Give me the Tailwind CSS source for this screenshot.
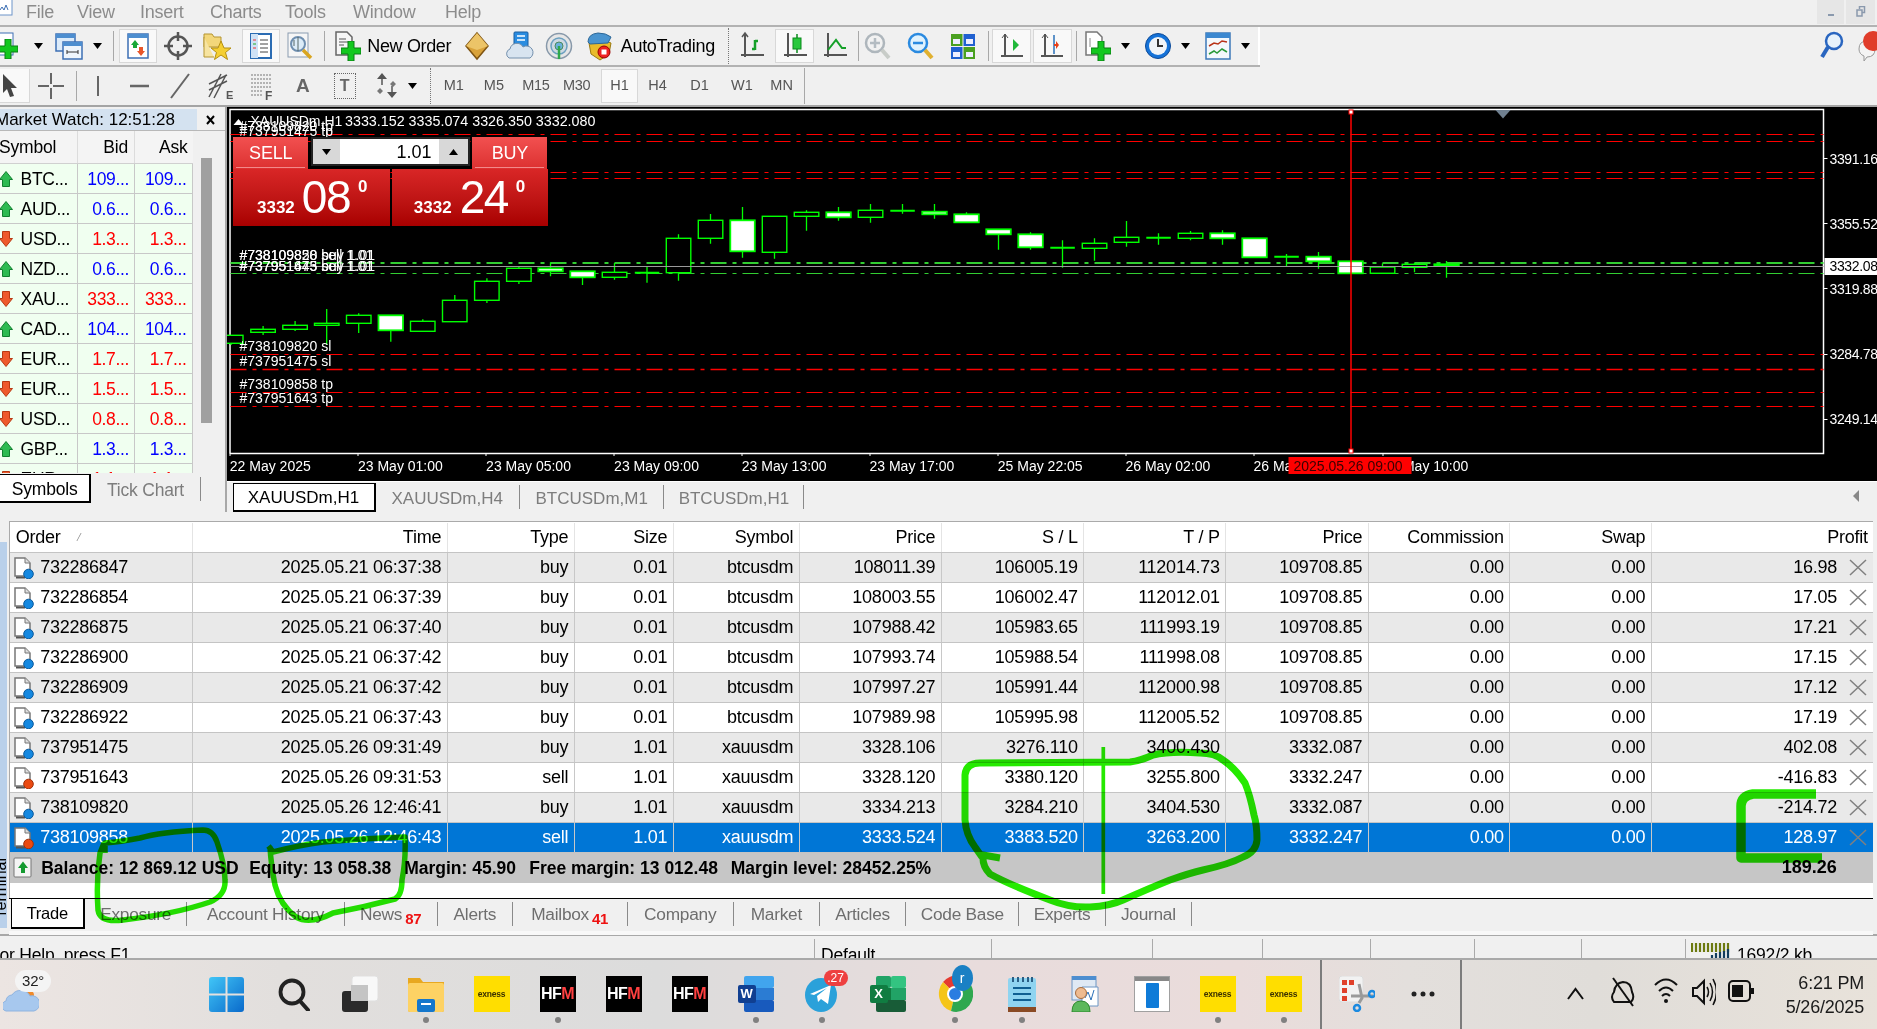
<!DOCTYPE html>
<html lang="en"><head><meta charset="utf-8"><title>MetaTrader</title>
<script src="https://cdn.jsdelivr.net/npm/@tailwindcss/browser@4"></script></head>
<body class="m-0 overflow-hidden">
<svg class="absolute w-0 h-0" aria-hidden="true"><defs>
<symbol id="plus" viewBox="0 0 20 20"><path d="M7 0h6v7h7v6h-7v7H7v-7H0V7h7z" fill="#12c81e" stroke="#0a7d14" stroke-width="1"/></symbol>
<symbol id="docb" viewBox="0 0 21 22"><path d="M2 1h10l5 5v13H2z" fill="#fff" stroke="#777" stroke-width="1.5"/><path d="M12 1v5h5" fill="#ddd" stroke="#777"/><path d="M3 20.500h9" stroke="#555" stroke-width="2"/><circle cx="15.500" cy="17" r="4.800" fill="#1488e0" stroke="#0b5a9c"/></symbol>
<symbol id="docr" viewBox="0 0 21 22"><path d="M2 1h10l5 5v13H2z" fill="#fff" stroke="#777" stroke-width="1.5"/><path d="M12 1v5h5" fill="#ddd" stroke="#777"/><path d="M3 20.500h9" stroke="#555" stroke-width="2"/><circle cx="15.500" cy="17" r="4.800" fill="#ea4a12" stroke="#a0300a"/></symbol>
<symbol id="up" viewBox="0 0 14 16"><path d="M7 .5 13.500 8.500H10.500V15.500H3.500V8.500H.5z" fill="#2dbb52" stroke="#128030"/></symbol>
<symbol id="down" viewBox="0 0 14 16"><path d="M7 15.500 13.500 7.500H10.500V.5H3.500V7.500H.5z" fill="#ee5a2c" stroke="#b83a14"/></symbol>
<symbol id="xx" viewBox="0 0 18 17"><path d="M1 1 17 16M17 1 1 16" stroke="#808080" stroke-width="1.500" fill="none"/></symbol>
<symbol id="caret" viewBox="0 0 9 6"><path d="M0 0h9L4.500 6z" fill="#000"/></symbol>
</defs></svg>

<div class="relative w-[1877px] h-[1029px] overflow-hidden flex flex-col bg-[#f0f0f0] text-[18px] text-black font-['Liberation_Sans',sans-serif]">

<!-- menu -->
<div class="h-[25px] shrink-0 flex items-center text-[#8c8c8c] tracking-[-0.25px] relative">
  <svg class="w-[14px] h-[17px] shrink-0 self-start" viewBox="0 0 14 17"><rect x="-4" y="-1" width="16" height="16" fill="#fff" stroke="#6d94c9"/><path d="M0 10l2-3 2 3 2-5 2 5" stroke="#3c6fb4" fill="none"/></svg>
  <span class="ml-[12px] w-[51px]">File</span><span class="w-[63px]">View</span><span class="w-[70px]">Insert</span><span class="w-[75px]">Charts</span><span class="w-[68px]">Tools</span><span class="w-[92px]">Window</span><span>Help</span>
  <div class="ml-auto flex self-start h-[24px] mr-[2px] gap-[2px]">
    <div class="w-[27px] bg-[#e6e6e6] flex items-center justify-center"><div class="w-[6px] h-[2px] mt-[5px] bg-[#8a99ad]"></div></div>
    <div class="w-[29px] bg-[#e6e6e6] flex items-center justify-center"><svg class="w-[10px] h-[12px]" viewBox="0 0 10 12"><path d="M3.500 3V.5h5v6H6M1 4h5v6H1z" fill="none" stroke="#8a99ad" stroke-width="1.500"/></svg></div>
  </div>
</div>
<div class="h-[2px] shrink-0 bg-[#b2b2b2]"></div>

<!-- toolbar 1 -->
<div class="h-[38px] shrink-0 flex items-center relative overflow-hidden">
  <div class="w-[1260px] h-[38px] shrink-0 flex items-center border-r-2 border-[#fff]">
    <svg class="w-[28px] h-[30px] shrink-0 ml-[-8px]" viewBox="0 0 28 30"><rect x="1" y="2" width="20" height="22" fill="#fff" stroke="#3c6fb4"/><use href="#plus" x="6" y="8" width="20" height="20"/></svg>
    <svg class="w-[9px] h-[6px] shrink-0 ml-[13.5px]"><use href="#caret"/></svg>
    <svg class="w-[28px] h-[30px] shrink-0 ml-[12.5px]" viewBox="0 0 28 30"><rect x="1" y="3" width="19" height="17" fill="#dcebfa" stroke="#3c6fb4" stroke-width="1.500"/><rect x="1" y="3" width="19" height="4" fill="#4d8ed0"/><rect x="8" y="11" width="19" height="17" fill="#eef5fc" stroke="#3c6fb4" stroke-width="1.500"/><rect x="8" y="11" width="19" height="4" fill="#4d8ed0"/><path d="M12 21h11M12 19v4M23 19v4" stroke="#333" fill="none"/></svg>
    <svg class="w-[9px] h-[6px] shrink-0 ml-[9.5px]"><use href="#caret"/></svg>
    <div class="w-px h-[30px] shrink-0 ml-[11.5px] bg-[#a8a8a8]"></div>
    <div class="w-[38.3px] h-[34px] shrink-0 ml-[5px] bg-[#f9f9f9] border border-[#d8d8d8] flex items-center justify-center"><svg class="w-[24px] h-[28px]" viewBox="0 0 24 28"><rect x="2" y="2" width="20" height="24" fill="#fff" stroke="#3c6fb4" stroke-width="1.500"/><rect x="2" y="2" width="20" height="4" fill="#4d8ed0"/><path d="M9 8 13 13H11v3H7v-3H5z" fill="#18a838"/><path d="M15 24 19 19H17v-4h-4v4h-2z" fill="#e8562a"/></svg></div>
    <svg class="w-[28px] h-[30px] shrink-0 ml-[6.5px]" viewBox="0 0 28 30"><circle cx="14" cy="15" r="9.500" fill="none" stroke="#555" stroke-width="2.500"/><path d="M14 1v9M14 20v9M0 15h9M19 15h9" stroke="#555" stroke-width="2.500"/></svg>
    <svg class="w-[28px] h-[30px] shrink-0 ml-[11.5px]" viewBox="0 0 28 30"><path d="M1 3h8l2 3h7v10H1z" fill="#f3d77a" stroke="#b59530"/><path d="M1 6v20h10" fill="#f7e4a0" stroke="#b59530"/><path d="M18 10l3 7h7l-5.500 4.500 2 7-6.500-4.500-6.500 4.500 2-7L8 17h7z" fill="#f5cf33" stroke="#b58f10"/></svg>
    <div class="w-[37.8px] h-[34px] shrink-0 ml-[10.6px] bg-[#f9f9f9] border border-[#d8d8d8] flex items-center justify-center"><svg class="w-[24px] h-[28px]" viewBox="0 0 24 28"><rect x="2" y="2" width="20" height="24" fill="#fff" stroke="#2b6cb3" stroke-width="2"/><rect x="2" y="2" width="7" height="24" fill="#cfe2f6"/><path d="M11 8h8M11 12h8M11 16h8M11 20h8" stroke="#444"/><path d="M4 8h3" stroke="#e33"/><path d="M4 12h3" stroke="#2a2"/><path d="M4 16h3" stroke="#e33"/></svg></div>
    <svg class="w-[28px] h-[30px] shrink-0 ml-[6.6px]" viewBox="0 0 28 30"><rect x="2" y="2" width="20" height="24" fill="#f6f6f6" stroke="#8a9bb0"/><circle cx="12" cy="13" r="7" fill="#dcecf8" stroke="#6f8fb0" stroke-width="2"/><path d="M12 6v14M8 9v6" stroke="#566" fill="none"/><path d="M17 19l8 8" stroke="#d9a520" stroke-width="3.500"/></svg>
    <div class="w-px h-[30px] shrink-0 ml-[10px] bg-[#a8a8a8]"></div>
    <svg class="w-[28px] h-[30px] shrink-0 ml-[8.7px]" viewBox="0 0 28 30"><path d="M2 1h11l5 5v18H2z" fill="#f6f6f6" stroke="#666" stroke-width="1.500"/><path d="M5 8h7M5 11h10M5 14h5" stroke="#555"/><use href="#plus" x="7" y="10" width="20" height="20"/></svg>
    <span class="shrink-0 ml-[5.3px] w-[86px] tracking-[-0.35px] whitespace-nowrap">New Order</span>
    <svg class="w-[28px] h-[30px] shrink-0 ml-[9.6px]" viewBox="0 0 28 30"><path d="M14 2 25 15 14 28 3 15z" fill="#d9a23a" stroke="#7f5412" stroke-width="1.500"/><path d="M14 2 3 15l11 4 11-4z" fill="#ecc468"/></svg>
    <svg class="w-[28px] h-[30px] shrink-0 ml-[15.4px]" viewBox="0 0 28 30"><rect x="8" y="1" width="14" height="20" rx="1" fill="#2a8ce0" stroke="#1a5ea0"/><path d="M11 5h8M11 9h8" stroke="#fff" stroke-width="1.500"/><path d="M3 27a5 5 0 0 1 1-9 7 7 0 0 1 13-2 6 6 0 0 1 7 11z" fill="#d8e4f0" stroke="#7490ad"/></svg>
    <svg class="w-[28px] h-[30px] shrink-0 ml-[11px]" viewBox="0 0 28 30"><circle cx="14" cy="15" r="12.500" fill="#e6e6e6" stroke="#8899aa" stroke-width="1.500"/><circle cx="14" cy="15" r="8" fill="#cdd8e2" stroke="#6ba0c0" stroke-width="1.500"/><circle cx="14" cy="15" r="4" fill="#6cb0dc" stroke="#4a8a5c"/><path d="M14 15v13" stroke="#2fa84a" stroke-width="2.500"/></svg>
    <svg class="w-[28px] h-[30px] shrink-0 ml-[12.5px]" viewBox="0 0 28 30"><path d="M3 12 14 8l11 4-2 11-9 6-9-6z" fill="#e9bb2a" stroke="#9a7a12"/><path d="M2 11q0-8 10-9 8 0 13 4l-3 6-18 1z" fill="#4a94cf" stroke="#2c6797"/><circle cx="18" cy="21" r="6" fill="#e22" stroke="#900"/><rect x="15.500" y="18.500" width="5" height="5" fill="#fff"/></svg>
    <span class="shrink-0 ml-[7px] w-[98px] tracking-[-0.3px] whitespace-nowrap">AutoTrading</span>
    <div class="h-[36px] shrink-0 ml-[9.5px] border-l border-dotted border-[#777]"></div>
    <svg class="w-[28px] h-[30px] shrink-0 ml-[9px]" viewBox="0 0 28 30"><path d="M7 2v24M3 24h23" stroke="#555" stroke-width="2"/><path d="M4 6l3-4 3 4" fill="none" stroke="#555" stroke-width="1.500"/><path d="M17 9v10M14 18h3M17 10h3" stroke="#14a028" stroke-width="2.500" fill="none"/></svg>
    <div class="w-[38.5px] h-[34px] shrink-0 ml-[9px] bg-[#f9f9f9] border border-[#d8d8d8] flex items-center justify-center"><svg class="w-[26px] h-[30px]" viewBox="0 0 26 30"><path d="M6 2v24M2 24h23" stroke="#555" stroke-width="2"/><path d="M15 3v19" stroke="#0a8a1c" stroke-width="1.500"/><rect x="11" y="7" width="8" height="11" fill="#28c83c" stroke="#0a8a1c"/></svg></div>
    <svg class="w-[28px] h-[30px] shrink-0 ml-[7px]" viewBox="0 0 28 30"><path d="M7 2v24M3 24h23" stroke="#555" stroke-width="2"/><path d="M7 19 15 9l6 8h4" stroke="#14a028" stroke-width="2" fill="none"/></svg>
    <div class="w-px h-[30px] shrink-0 ml-[9.5px] bg-[#a8a8a8]"></div>
    <svg class="w-[28px] h-[30px] shrink-0 ml-[4px]" viewBox="0 0 28 30"><circle cx="12" cy="12" r="9" fill="#f2f2f2" stroke="#aeb6bc" stroke-width="2.500"/><path d="M12 7v10M7 12h10" stroke="#b4bcc2" stroke-width="2.500"/><path d="M19 19l7 8" stroke="#c8ccc8" stroke-width="4"/></svg>
    <svg class="w-[28px] h-[30px] shrink-0 ml-[15px]" viewBox="0 0 28 30"><circle cx="12" cy="12" r="9" fill="#e0f2fd" stroke="#2a8ae0" stroke-width="2.500"/><path d="M7 12h10" stroke="#2a8ae0" stroke-width="2.500"/><path d="M19 19l7 8" stroke="#e0b030" stroke-width="4"/></svg>
    <svg class="w-[28px] h-[30px] shrink-0 ml-[14.7px]" viewBox="0 0 28 30"><rect x="2" y="3" width="11.500" height="12" fill="#4aa020"/><rect x="14.500" y="3" width="11.500" height="12" fill="#2060d0"/><rect x="2" y="16" width="11.500" height="12" fill="#2060d0"/><rect x="14.500" y="16" width="11.500" height="12" fill="#4aa020"/><path d="M4 8h7v5H4zM17 8h7v5h-7zM4 21h7v5H4zM17 21h7v5h-7z" fill="#eef"/></svg>
    <div class="w-px h-[30px] shrink-0 ml-[11px] bg-[#a8a8a8]"></div>
    <div class="w-[38.8px] h-[34px] shrink-0 ml-[3.2px] bg-[#f9f9f9] border border-[#d8d8d8] flex items-center justify-center"><svg class="w-[26px] h-[30px]" viewBox="0 0 26 30"><path d="M6 3v23M2 25h22" stroke="#555" stroke-width="2"/><path d="M3 7l3-4 3 4" fill="none" stroke="#555"/><path d="M14 8l6 6-6 6z" fill="#20b83a"/></svg></div>
    <div class="w-[38.5px] h-[34px] shrink-0 ml-[2.2px] bg-[#f9f9f9] border border-[#d8d8d8] flex items-center justify-center"><svg class="w-[26px] h-[30px]" viewBox="0 0 26 30"><path d="M6 3v23M2 25h22" stroke="#555" stroke-width="2"/><path d="M3 7l3-4 3 4" fill="none" stroke="#555"/><path d="M15 4v19" stroke="#2a70b8" stroke-width="1.500"/><path d="M20 14l-3-4v3h-2v2h2v3z" fill="#e8401a"/></svg></div>
    <div class="w-px h-[30px] shrink-0 ml-[4.2px] bg-[#a8a8a8]"></div>
    <svg class="w-[28px] h-[30px] shrink-0 ml-[7.3px]" viewBox="0 0 28 30"><path d="M2 1h11l5 5v18H2z" fill="#fff" stroke="#777" stroke-width="1.500"/><path d="M6 7v9" stroke="#888"/><use href="#plus" x="7" y="10" width="20" height="20"/></svg>
    <svg class="w-[9px] h-[6px] shrink-0 ml-[8.5px]"><use href="#caret"/></svg>
    <svg class="w-[28px] h-[30px] shrink-0 ml-[14.1px]" viewBox="0 0 28 30"><circle cx="14" cy="15" r="12.500" fill="#1472d8" stroke="#0c4a98"/><circle cx="14" cy="15" r="9" fill="#f0f4f8"/><path d="M14 8v7h5" stroke="#333" stroke-width="2" fill="none"/></svg>
    <svg class="w-[9px] h-[6px] shrink-0 ml-[8.9px]"><use href="#caret"/></svg>
    <svg class="w-[28px] h-[30px] shrink-0 ml-[14.5px]" viewBox="0 0 28 30"><rect x="2" y="2" width="24" height="26" fill="#f4f8fc" stroke="#3c78b8" stroke-width="1.500"/><rect x="2" y="2" width="24" height="5" fill="#3c88d0"/><path d="M5 15l5-3 4 1 4-3 5 1" stroke="#b8341a" stroke-width="1.500" fill="none"/><path d="M5 23l5-3 3 2 5-4 5 3" stroke="#2a9a3a" stroke-width="1.500" fill="none"/></svg>
    <svg class="w-[9px] h-[6px] shrink-0 ml-[9px]"><use href="#caret"/></svg>
  </div>
  <svg class="w-[26px] h-[34px] shrink-0 ml-[559px]" viewBox="0 0 26 34"><circle cx="15" cy="12" r="8" fill="#e8f2fb" stroke="#2a66c0" stroke-width="2.500"/><path d="M9 18 3 28" stroke="#2a66c0" stroke-width="4"/></svg>
  <svg class="w-[25px] h-[38px] shrink-0 ml-[11px]" viewBox="0 0 25 38"><path d="M3 22q0-8 8-8t8 8-8 8l-3 4v-5q-5-2-5-7z" fill="#f4f4f4" stroke="#999"/><circle cx="17" cy="14" r="10" fill="#e03c2a"/></svg>
</div>
<div class="h-[2px] w-[1260px] shrink-0 bg-[#b2b2b2]"></div>

<!-- toolbar 2 -->
<div class="h-[38px] shrink-0 flex items-center text-[14.5px] text-[#555]">
  <div class="w-[30px] h-[34px] shrink-0 bg-[#f9f9f9] border-r border-b border-[#d8d8d8] flex items-center"><svg class="w-[18px] h-[26px]" viewBox="0 0 18 26"><path d="M3 1v19l4-4 3 8 4-1-3-8h6z" fill="#444"/></svg></div>
  <svg class="w-[28px] h-[30px] shrink-0 ml-[7px]" viewBox="0 0 28 30"><path d="M14 2v11M14 17v11M1 15h11M16 15h11" stroke="#666" stroke-width="2"/></svg>
  <div class="w-px h-[30px] shrink-0 ml-[10.5px] bg-[#a8a8a8]"></div>
  <svg class="w-[28px] h-[30px] shrink-0 ml-[7.2px]" viewBox="0 0 28 30"><path d="M14 5v20" stroke="#666" stroke-width="2"/></svg>
  <svg class="w-[28px] h-[30px] shrink-0 ml-[14px]" viewBox="0 0 28 30"><path d="M4 15h19" stroke="#666" stroke-width="2.500"/></svg>
  <svg class="w-[28px] h-[30px] shrink-0 ml-[12.300px]" viewBox="0 0 28 30"><path d="M5 27 23 3" stroke="#666" stroke-width="2"/></svg>
  <svg class="w-[28px] h-[30px] shrink-0 ml-[12.600px]" viewBox="0 0 28 30"><path d="M2 26 14 3M7 27 19 4M2 13 20 4M2 19 20 10" stroke="#555" stroke-width="1.500"/><text x="19" y="28" font-size="11" font-weight="700" fill="#555">E</text></svg>
  <svg class="w-[28px] h-[30px] shrink-0 ml-[13.400px]" viewBox="0 0 28 30"><path d="M3 4h20M3 8h20M3 12h20M3 16h20M3 20h12M3 24h12" stroke="#777" stroke-dasharray="2 1"/><text x="17" y="29" font-size="12" font-weight="700" fill="#555">F</text></svg>
  <div class="w-[28px] shrink-0 ml-[12.800px] text-center font-bold text-[19px] text-[#666]">A</div>
  <div class="w-[28px] shrink-0 ml-[13.900px] flex justify-center"><div class="w-[22px] h-[26px] border border-dotted border-[#666] flex items-center justify-center font-bold text-[16px] text-[#666]">T</div></div>
  <svg class="w-[28px] h-[30px] shrink-0 ml-[14px]" viewBox="0 0 28 30"><path d="M9 2l5 6H4zM19 27l5-6H14z" fill="#555"/><path d="M9 8v6M19 15v6" stroke="#555" stroke-width="1.500"/><path d="M20 10l3 3-3 3-3-3zM7 17l3 3-3 3-3-3z" fill="#777"/></svg>
  <svg class="w-[9px] h-[6px] shrink-0 ml-[7.300px]"><use href="#caret"/></svg>
  <div class="h-[36px] shrink-0 ml-[13px] border-l border-dotted border-[#777]"></div>
  <div class="w-[40px] shrink-0 ml-[2.800px] text-center">M1</div>
  <div class="w-[40px] shrink-0 ml-[0.200px] text-center">M5</div>
  <div class="w-[40px] shrink-0 ml-[2px] text-center tracking-[-0.3px]">M15</div>
  <div class="w-[40px] shrink-0 ml-[0.700px] text-center tracking-[-0.3px]">M30</div>
  <div class="w-[37.800px] h-[34px] shrink-0 ml-[4px] bg-[#f9f9f9] border border-[#d8d8d8] flex items-center justify-center">H1</div>
  <div class="w-[40px] shrink-0 ml-[-0.800px] text-center">H4</div>
  <div class="w-[40px] shrink-0 ml-[1.900px] text-center">D1</div>
  <div class="w-[40px] shrink-0 ml-[2.400px] text-center">W1</div>
  <div class="w-[40px] shrink-0 ml-[-0.300px] text-center">MN</div>
  <div class="w-px h-[36px] shrink-0 ml-[2.300px] bg-[#a8a8a8]"></div>
</div>
<div class="h-[2px] shrink-0 bg-[#a4a4a4]"></div>

<!-- upper: market watch + chart -->
<div class="h-[405px] shrink-0 flex">
  <div class="w-[226.500px] shrink-0 flex flex-col border-r-2 border-[#a8a8a8]">
    <div class="h-[22.500px] shrink-0 pt-[2px] flex items-start">
      <div class="w-[196.500px] h-[21px] bg-[#d4e2f0] overflow-hidden flex items-center text-[17px] whitespace-nowrap"><span class="ml-[-5px]">Market Watch: 12:51:28</span></div>
      <svg class="w-[9px] h-[10px] ml-[9px] mt-[6px]" viewBox="0 0 9 10"><path d="M1 1l7 8M8 1 1 9" stroke="#000" stroke-width="2"/></svg>
    </div>
    <div class="flex h-[343px] shrink-0 border-t border-[#b8b8b8]">
      <div class="w-[192.600px] shrink-0 flex flex-col overflow-hidden">
        <div class="h-[33px] shrink-0 grid grid-cols-[78px_57px_57.600px] bg-[#f4f4f4] border-b border-[#d0d0d0] text-[17.500px] leading-[32px] tracking-[-0.2px]">
          <div class="border-r border-[#dcdcdc] whitespace-nowrap ml-[-1px]">Symbol</div><div class="border-r border-[#dcdcdc] text-right pr-[6px]">Bid</div><div class="text-right pr-[5px]">Ask</div>
        </div>
        <div class="h-[309.500px] overflow-hidden bg-[#f0fff0] text-[17.500px] leading-[30px] tracking-[-0.35px] [&>div]:h-[30px] [&>div]:grid [&>div]:grid-cols-[78px_57px_57.600px] [&>div]:border-b [&>div]:border-[#c8c8c8] [&>div>div]:border-r [&>div>div]:border-[#c8c8c8] [&>div>div:not(:first-child)]:text-right [&>div>div:not(:first-child)]:pr-[5px]">
          <div><div class="flex items-center"><svg class="w-[14px] h-[16px] ml-[-1px] mr-[7.600px] shrink-0"><use href="#up"/></svg>BTC...</div><div class="text-[#0000ff]">109...</div><div class="text-[#0000ff]">109...</div></div>
          <div><div class="flex items-center"><svg class="w-[14px] h-[16px] ml-[-1px] mr-[7.600px] shrink-0"><use href="#up"/></svg>AUD...</div><div class="text-[#0000ff]">0.6...</div><div class="text-[#0000ff]">0.6...</div></div>
          <div><div class="flex items-center"><svg class="w-[14px] h-[16px] ml-[-1px] mr-[7.600px] shrink-0"><use href="#down"/></svg>USD...</div><div class="text-[#ff0000]">1.3...</div><div class="text-[#ff0000]">1.3...</div></div>
          <div><div class="flex items-center"><svg class="w-[14px] h-[16px] ml-[-1px] mr-[7.600px] shrink-0"><use href="#up"/></svg>NZD...</div><div class="text-[#0000ff]">0.6...</div><div class="text-[#0000ff]">0.6...</div></div>
          <div><div class="flex items-center"><svg class="w-[14px] h-[16px] ml-[-1px] mr-[7.600px] shrink-0"><use href="#down"/></svg>XAU...</div><div class="text-[#ff0000]">333...</div><div class="text-[#ff0000]">333...</div></div>
          <div><div class="flex items-center"><svg class="w-[14px] h-[16px] ml-[-1px] mr-[7.600px] shrink-0"><use href="#up"/></svg>CAD...</div><div class="text-[#0000ff]">104...</div><div class="text-[#0000ff]">104...</div></div>
          <div><div class="flex items-center"><svg class="w-[14px] h-[16px] ml-[-1px] mr-[7.600px] shrink-0"><use href="#down"/></svg>EUR...</div><div class="text-[#ff0000]">1.7...</div><div class="text-[#ff0000]">1.7...</div></div>
          <div><div class="flex items-center"><svg class="w-[14px] h-[16px] ml-[-1px] mr-[7.600px] shrink-0"><use href="#down"/></svg>EUR...</div><div class="text-[#ff0000]">1.5...</div><div class="text-[#ff0000]">1.5...</div></div>
          <div><div class="flex items-center"><svg class="w-[14px] h-[16px] ml-[-1px] mr-[7.600px] shrink-0"><use href="#down"/></svg>USD...</div><div class="text-[#ff0000]">0.8...</div><div class="text-[#ff0000]">0.8...</div></div>
          <div><div class="flex items-center"><svg class="w-[14px] h-[16px] ml-[-1px] mr-[7.600px] shrink-0"><use href="#up"/></svg>GBP...</div><div class="text-[#0000ff]">1.3...</div><div class="text-[#0000ff]">1.3...</div></div>
          <div><div class="flex items-center"><svg class="w-[14px] h-[16px] ml-[-1px] mr-[7.600px] shrink-0"><use href="#down"/></svg>EUR...</div><div class="text-[#ff0000]">1.1...</div><div class="text-[#ff0000]">1.1...</div></div>
        </div>
      </div>
      <div class="w-[11px] h-[265px] ml-[8.300px] mt-[27.500px] bg-[#a0a0a0] shrink-0"></div>
    </div>
    <div class="h-[38.500px] shrink-0 flex items-start text-[17.500px] tracking-[-0.2px]">
      <div class="w-[91.300px] h-[29px] mt-[1.500px] pt-[3px] bg-white border-t border-black border-r-2 border-b-2 flex items-center justify-center">Symbols</div>
      <div class="w-[108.400px] h-[29px] mt-[1.500px] pt-[3px] text-[#7d7d7d] flex items-center justify-center"><span class="whitespace-nowrap">Tick Chart</span></div>
      <div class="w-px h-[24px] mt-[4px] bg-[#8a8a8a]"></div>
    </div>
  </div>

  <div class="flex-1 flex flex-col min-w-0">
    <div class="relative h-[374px] shrink-0 bg-black overflow-hidden">
      <svg class="block w-[1650.500px] h-[374px] font-['Liberation_Sans',sans-serif]" viewBox="226.500 107 1650.500 374">
        <path d="M229.500 453.500V109.500H1823V453.500H229.500" fill="none" stroke="#fff" stroke-width="1.500"/>
        <g stroke="#fff" stroke-width="1"><path d="M229.500 453v3M357.500 453v3M485.500 453v3M613.500 453v3M741.500 453v3M869.500 453v3M997.500 453v3M1125.500 453v3M1253.500 453v3M1382.500 453v3"/><path d="M1823 158.500h4M1823 223.500h4M1823 288.500h4M1823 354.500h4M1823 419.500h4"/></g>
        <g stroke="#f00" stroke-width="1.200" stroke-dasharray="16 6 4 6" fill="none">
          <path d="M230 134.500H1823M230 141.500H1823M230 172.500H1823M230 178.500H1823M230 354.500H1823"/>
          <path d="M230 369.500H1823" stroke-width="1.600"/>
          <path d="M230 392.500H1823M230 406.500H1823"/>
        </g>
        <path d="M230 263H1823" stroke="#32cd32" stroke-width="2.200" stroke-dasharray="16 6 4 6" fill="none"/>
        <path d="M230 273.500H1823" stroke="#32cd32" stroke-width="1.200" stroke-dasharray="16 6 4 6" fill="none"/>
        <!-- wicks -->
        <path stroke="#0f0" stroke-width="1.300" fill="none" d="M230.600 335V345M262.600 326V335M294.600 321V331M326.200 309V345M358.200 313.300V333M390.300 315V341.700M422.300 319.300V331M454.300 295V321M486.400 278.300V303M518.400 266.300V284M550 262.300V276.300M582 271V285M614 263V279.700M646.500 266.700V282.700M678 234.300V280.700M710 214V243.700M742 207V257.700M774 216V258.700M806 210.300V230.700M838 207V220.700M870 204V222.700M902 204V213.700M934 204V218.700M966 212.300V222M998 229V249.700M1030 232.300V249.700M1062 240.300V267.700M1094 238.300V260.700M1126 221V246.700M1158 233.300V244.700M1190 231V240.300M1222 230.300V244.700M1286 254V266.300M1318 252V268.700M1382 263.300V273M1414 262.700V272.300M1446 261V277.700"/>
        <!-- hollow bodies -->
        <g fill="#000" stroke="#0f0" stroke-width="1.400">
          <rect x="218" y="335.300" width="24.500" height="8"/><rect x="250.300" y="329.300" width="24.500" height="3"/><rect x="282.300" y="325.300" width="24.500" height="4"/><rect x="314" y="323.300" width="24.500" height="2"/><rect x="346" y="315.300" width="24.500" height="8"/><rect x="410" y="321.300" width="24.500" height="10"/><rect x="442" y="300.300" width="24.500" height="21.400"/><rect x="474.100" y="281.300" width="24.500" height="19"/><rect x="506.100" y="268.300" width="24.500" height="13"/><rect x="601.800" y="272.300" width="24.500" height="5"/><rect x="665.800" y="238.300" width="24.500" height="34.400"/><rect x="697.800" y="220.300" width="24.500" height="18"/><rect x="761.800" y="216.300" width="24.500" height="36"/><rect x="793.800" y="212.300" width="24.500" height="4"/><rect x="857.800" y="210.300" width="24.500" height="7"/><rect x="1081.800" y="243.300" width="24.500" height="5"/><rect x="1113.800" y="237.300" width="24.500" height="5"/><rect x="1177.800" y="233.300" width="24.500" height="5"/><rect x="1369.800" y="267" width="24.500" height="6.300"/><rect x="1401.800" y="264.300" width="24.500" height="3"/>
        </g>
        <!-- filled bodies -->
        <g fill="#fff" stroke="#0f0" stroke-width="1.800">
          <rect x="378" y="315.300" width="24.500" height="15"/><rect x="537.800" y="268.300" width="24.500" height="3"/><rect x="569.800" y="271.300" width="24.500" height="6"/><rect x="729.800" y="220.300" width="24.500" height="31"/><rect x="825.800" y="212.300" width="24.500" height="5"/><rect x="921.800" y="211.700" width="24.500" height="2.600"/><rect x="953.800" y="214.300" width="24.500" height="8"/><rect x="985.800" y="229.300" width="24.500" height="5"/><rect x="1017.800" y="234.300" width="24.500" height="13"/><rect x="1209.800" y="233.300" width="24.500" height="5"/><rect x="1241.800" y="238.300" width="24.500" height="19"/><rect x="1305.800" y="256.700" width="24.500" height="4.600"/><rect x="1337.800" y="261.300" width="24.500" height="12"/><rect x="1433.800" y="264.300" width="24.500" height="1.700"/>
        </g>
        <!-- doji bars -->
        <path stroke="#0f0" stroke-width="2" d="M634.300 272.700h24.500M889.800 210.700h24.500M1049.800 247.700h24.500M1145.800 237.700h24.500M1273.800 256.700h24.500"/>
        <path d="M230 266.500H1823" stroke="#9a9a9a" stroke-width="1"/>
        <path d="M1350.500 112V451" stroke="#f00" stroke-width="1.500"/>
        <rect x="1348.500" y="110" width="4" height="4" fill="#fff" stroke="#f00"/><rect x="1348.500" y="449" width="4" height="4" fill="#fff" stroke="#f00"/>
        <path d="M1495 110h15l-7.500 8.500z" fill="#708090"/>
        <path d="M233 125l5-6 5 6z" fill="#fff"/>
        <g fill="#fff" font-size="14">
          <text x="239" y="131">#738109820 tp</text><text x="239" y="136">#737951475 tp</text>
          <text x="250" y="126">XAUUSDm,H1</text>
          <text x="344.500" y="126" font-size="14.300">3333.152 3335.074 3326.350 3332.080</text>
          <text x="239" y="260">#738109858 sell 1.01</text><text x="239" y="260">#738109820 buy 1.01</text>
          <text x="239" y="271">#737951643 sell 1.01</text><text x="239" y="271">#737951475 buy 1.01</text>
          <text x="239" y="351">#738109820 sl</text><text x="239" y="366">#737951475 sl</text><text x="239" y="389">#738109858 tp</text><text x="239" y="403">#737951643 tp</text>
          <text x="229.300" y="471">22 May 2025</text><text x="357.500" y="471">23 May 01:00</text><text x="485.600" y="471">23 May 05:00</text><text x="613.600" y="471">23 May 09:00</text><text x="741.300" y="471">23 May 13:00</text><text x="869" y="471">23 May 17:00</text><text x="997.300" y="471">25 May 22:05</text><text x="1125" y="471">26 May 02:00</text><text x="1253" y="471">26 May 06:00</text><text x="1383" y="471">26 May 10:00</text>
          <text x="1829" y="164" letter-spacing="-0.35">3391.160</text><text x="1829" y="229" letter-spacing="-0.35">3355.520</text><text x="1829" y="294" letter-spacing="-0.35">3319.880</text><text x="1829" y="359" letter-spacing="-0.35">3284.780</text><text x="1829" y="424" letter-spacing="-0.35">3249.140</text>
        </g>
        <rect x="1288" y="457" width="123" height="17" fill="#f00"/>
        <text x="1293" y="471" font-size="14" fill="#3a0000">2025.05.26 09:00</text>
        <rect x="1824" y="258" width="53" height="17" fill="#fff"/>
        <text x="1829" y="271" font-size="14" letter-spacing="-0.35" fill="#000">3332.080</text>
      </svg>

      <!-- one click trading -->
      <div class="absolute left-[6.500px] top-[30px] w-[314.600px] text-white">
        <div class="flex h-[32px]">
          <div class="w-[75.400px] bg-linear-to-b from-[#f25050] to-[#dc3030] flex flex-col"><div class="flex-1 pt-[2px] flex items-center justify-center text-[18px] tracking-[-0.2px]">SELL</div><div class="h-px mx-[3px] mb-[1px] bg-[#f28a8a]"></div></div>
          <div class="w-[159.500px] ml-[2.600px] h-[29.400px] bg-[#e8e8e8] border-2 border-[#222] flex text-black">
            <div class="w-[27px] bg-[#d8d8d8] flex items-center justify-center"><svg class="w-[9px] h-[6px]"><use href="#caret"/></svg></div>
            <div class="flex-1 bg-white text-right pr-[8px] leading-[26px] text-[18px]">1.01</div>
            <div class="w-[29px] bg-[#d8d8d8] flex items-center justify-center"><svg class="w-[9px] h-[6px] rotate-180"><use href="#caret"/></svg></div>
          </div>
          <div class="w-[75px] ml-[2px] bg-linear-to-b from-[#f25050] to-[#dc3030] flex flex-col"><div class="flex-1 pt-[2px] flex items-center justify-center text-[18px] tracking-[-0.2px]">BUY</div><div class="h-px mx-[3px] mb-[1px] bg-[#f28a8a]"></div></div>
        </div>
        <div class="flex gap-[2.300px]">
          <div class="w-[156.500px] h-[56.700px] bg-linear-to-b from-[#d92626] to-[#a80000] flex items-baseline pl-[24px] pt-[5.100px]"><span class="font-bold text-[17px]">3332</span><span class="ml-[7px] text-[46px] leading-[46px] tracking-[-1.500px]">08</span><span class="ml-[8px] font-bold text-[17px] -translate-y-[21px]">0</span></div>
          <div class="w-[155.800px] h-[56.700px] bg-linear-to-b from-[#d92626] to-[#a80000] flex items-baseline pl-[22px] pt-[5.100px]"><span class="font-bold text-[17px]">3332</span><span class="ml-[8px] text-[46px] leading-[46px] tracking-[-1.500px]">24</span><span class="ml-[8px] font-bold text-[17px] -translate-y-[21px]">0</span></div>
        </div>
      </div>
    </div>
    <!-- chart tabs -->
    <div class="h-[31px] shrink-0 flex items-start text-[17px] text-[#7d7d7d] border-t border-white">
      <div class="w-[143px] h-[29px] ml-[6px] mt-[0.500px] pt-[3px] bg-white border-t border-black border-l border-r-2 border-b-2 flex items-center justify-center text-black">XAUUSDm,H1</div>
      <div class="w-[144.400px] h-[24px] mt-[3px] pt-[4px] border-r border-[#8a8a8a] flex items-center justify-center">XAUUSDm,H4</div>
      <div class="w-[144.600px] h-[24px] mt-[3px] pt-[4px] border-r border-[#8a8a8a] flex items-center justify-center">BTCUSDm,M1</div>
      <div class="w-[139.800px] h-[24px] mt-[3px] pt-[4px] border-r border-[#8a8a8a] flex items-center justify-center">BTCUSDm,H1</div>
      <svg class="w-[6px] h-[12px] ml-[1049px] mt-[8px]" viewBox="0 0 6 12"><path d="M6 0v12L0 6z" fill="#888"/></svg>
    </div>
  </div>
</div>

<!-- terminal -->
<div class="h-[422px] shrink-0 flex border-b-2 border-[#a8a8a8] box-content">
  <div class="w-[8.700px] shrink-0 pt-[29.700px]">
    <div class="w-[7px] h-[386px] bg-[#b9d0ea] overflow-hidden relative"><div class="absolute top-[316px] left-[-8px] [writing-mode:vertical-rl] rotate-180 text-[16px] leading-[18px] whitespace-nowrap">Terminal</div></div>
  </div>
  <div class="w-[1864px] shrink-0 pt-[8.700px] flex flex-col">
    <div class="bg-white border-t border-l border-[#aaaaaa] flex-1 flex flex-col text-[18px] tracking-[-0.25px]">
      <div class="h-[31px] shrink-0 grid grid-cols-[183.500px_254.500px_127px_99px_126px_142px_142.500px_142px_142.500px_141.500px_141.500px_221.500px] pt-[1px] leading-[29px] border-b border-[#c4c4c4] [&>div]:border-r [&>div]:border-[#e4e4e4] [&>div:not(:first-child)]:text-right [&>div]:pr-[5.500px] [&>div:last-child]:border-r-0">
        <div class="pl-[6px] flex">Order<span class="ml-[18px] text-[10px] text-[#888]">⁄</span></div><div>Time</div><div>Type</div><div>Size</div><div>Symbol</div><div>Price</div><div>S / L</div><div>T / P</div><div>Price</div><div>Commission</div><div>Swap</div><div>Profit</div>
      </div>
      <div class="[&>div]:h-[30px] [&>div]:grid [&>div]:grid-cols-[183.500px_254.500px_127px_99px_126px_142px_142.500px_142px_142.500px_141.500px_141.500px_221.500px] [&>div]:border-b [&>div]:border-[#c4c4c4] [&>div>div]:border-r [&>div>div]:border-[#c8c8c8] [&>div>div]:pt-[1.500px] [&>div>div]:leading-[27.500px] [&>div>div:not(:first-child)]:text-right [&>div>div]:pr-[5.500px] [&>div>div:last-child]:border-r-0 [&>div>div:last-child]:relative [&>div>div:last-child>span]:mr-[30.700px] [&>div>div:last-child>svg]:absolute [&>div>div:last-child>svg]:right-[6px] [&>div>div:last-child>svg]:top-[6px] [&>div>div:last-child>svg]:w-[18px] [&>div>div:last-child>svg]:h-[17px] [&>div>div:first-child]:flex [&>div>div:first-child]:items-center [&>div>div:first-child>svg]:w-[21px] [&>div>div:first-child>svg]:h-[22px] [&>div>div:first-child>svg]:ml-[3.500px] [&>div>div:first-child>svg]:mr-[6px]">
        <div class="bg-[#e9e9e9]"><div><svg><use href="#docb"/></svg>732286847</div><div>2025.05.21 06:37:38</div><div>buy</div><div>0.01</div><div>btcusdm</div><div>108011.39</div><div>106005.19</div><div>112014.73</div><div>109708.85</div><div>0.00</div><div>0.00</div><div><span>16.98</span><svg><use href="#xx"/></svg></div></div>
        <div class="bg-white"><div><svg><use href="#docb"/></svg>732286854</div><div>2025.05.21 06:37:39</div><div>buy</div><div>0.01</div><div>btcusdm</div><div>108003.55</div><div>106002.47</div><div>112012.01</div><div>109708.85</div><div>0.00</div><div>0.00</div><div><span>17.05</span><svg><use href="#xx"/></svg></div></div>
        <div class="bg-[#e9e9e9]"><div><svg><use href="#docb"/></svg>732286875</div><div>2025.05.21 06:37:40</div><div>buy</div><div>0.01</div><div>btcusdm</div><div>107988.42</div><div>105983.65</div><div>111993.19</div><div>109708.85</div><div>0.00</div><div>0.00</div><div><span>17.21</span><svg><use href="#xx"/></svg></div></div>
        <div class="bg-white"><div><svg><use href="#docb"/></svg>732286900</div><div>2025.05.21 06:37:42</div><div>buy</div><div>0.01</div><div>btcusdm</div><div>107993.74</div><div>105988.54</div><div>111998.08</div><div>109708.85</div><div>0.00</div><div>0.00</div><div><span>17.15</span><svg><use href="#xx"/></svg></div></div>
        <div class="bg-[#e9e9e9]"><div><svg><use href="#docb"/></svg>732286909</div><div>2025.05.21 06:37:42</div><div>buy</div><div>0.01</div><div>btcusdm</div><div>107997.27</div><div>105991.44</div><div>112000.98</div><div>109708.85</div><div>0.00</div><div>0.00</div><div><span>17.12</span><svg><use href="#xx"/></svg></div></div>
        <div class="bg-white"><div><svg><use href="#docb"/></svg>732286922</div><div>2025.05.21 06:37:43</div><div>buy</div><div>0.01</div><div>btcusdm</div><div>107989.98</div><div>105995.98</div><div>112005.52</div><div>109708.85</div><div>0.00</div><div>0.00</div><div><span>17.19</span><svg><use href="#xx"/></svg></div></div>
        <div class="bg-[#e9e9e9]"><div><svg><use href="#docb"/></svg>737951475</div><div>2025.05.26 09:31:49</div><div>buy</div><div>1.01</div><div>xauusdm</div><div>3328.106</div><div>3276.110</div><div>3400.430</div><div>3332.087</div><div>0.00</div><div>0.00</div><div><span>402.08</span><svg><use href="#xx"/></svg></div></div>
        <div class="bg-white"><div><svg><use href="#docr"/></svg>737951643</div><div>2025.05.26 09:31:53</div><div>sell</div><div>1.01</div><div>xauusdm</div><div>3328.120</div><div>3380.120</div><div>3255.800</div><div>3332.247</div><div>0.00</div><div>0.00</div><div><span>-416.83</span><svg><use href="#xx"/></svg></div></div>
        <div class="bg-[#e9e9e9]"><div><svg><use href="#docb"/></svg>738109820</div><div>2025.05.26 12:46:41</div><div>buy</div><div>1.01</div><div>xauusdm</div><div>3334.213</div><div>3284.210</div><div>3404.530</div><div>3332.087</div><div>0.00</div><div>0.00</div><div><span>-214.72</span><svg><use href="#xx"/></svg></div></div>
        <div class="bg-[#0076d6] text-white"><div><svg><use href="#docr"/></svg>738109858</div><div>2025.05.26 12:46:43</div><div>sell</div><div>1.01</div><div>xauusdm</div><div>3333.524</div><div>3383.520</div><div>3263.200</div><div>3332.247</div><div>0.00</div><div>0.00</div><div><span>128.97</span><svg><use href="#xx"/></svg></div></div>
      </div>
      <div class="h-[30px] shrink-0 bg-[#c6c6c6] flex items-center font-bold text-[17.500px] tracking-normal whitespace-nowrap">
        <svg class="w-[20px] h-[22px] ml-[3px] mr-[8.500px] shrink-0" viewBox="0 0 20 22"><rect x="1" y="1" width="17" height="19" rx="1" fill="#f4f4f4" stroke="#777"/><path d="M10 4.500 15 11h-3v5H8v-5H5z" fill="#149a30"/></svg>
        <span class="w-[208px] shrink-0">Balance: 12 869.12 USD</span><span class="w-[155px] shrink-0">Equity: 13 058.38</span><span class="w-[125px] shrink-0">Margin: 45.90</span><span class="w-[201.600px] shrink-0">Free margin: 13 012.48</span><span class="shrink-0">Margin level: 28452.25%</span>
        <span class="ml-auto mr-[36px] text-[18px]">189.26</span>
      </div>
      <div class="h-[15px] shrink-0"></div>
      <div class="h-[33px] shrink-0 ml-[-1px] flex items-start bg-[#f0f0f0] border-t border-black text-[17.300px] text-[#6e6e6e] [&>div]:pt-[2px]">
        <div class="w-[74.200px] h-[30px] ml-[2px] bg-white border-l border-r-2 border-b-2 border-black text-black flex items-center justify-center text-[16.500px]">Trade</div>
        <div class="w-[102.600px] h-[24px] mt-[3.500px] border-r border-[#8a8a8a] flex items-center justify-center">Exposure</div>
        <div class="w-[157.100px] h-[24px] mt-[3.500px] border-r border-[#8a8a8a] flex items-center justify-center">Account History</div>
        <div class="w-[93.300px] h-[24px] mt-[3.500px] border-r border-[#8a8a8a] flex items-center justify-center"><span>News</span><span class="ml-[3px] mt-[8px] text-[#ee1111] font-bold text-[15px]">87</span></div>
        <div class="w-[75px] h-[24px] mt-[3.500px] border-r border-[#8a8a8a] flex items-center justify-center">Alerts</div>
        <div class="w-[114.700px] h-[24px] mt-[3.500px] border-r border-[#8a8a8a] flex items-center justify-center"><span>Mailbox</span><span class="ml-[3px] mt-[8px] text-[#ee1111] font-bold text-[15px]">41</span></div>
        <div class="w-[106.300px] h-[24px] mt-[3.500px] border-r border-[#8a8a8a] flex items-center justify-center">Company</div>
        <div class="w-[86px] h-[24px] mt-[3.500px] border-r border-[#8a8a8a] flex items-center justify-center">Market</div>
        <div class="w-[86.500px] h-[24px] mt-[3.500px] border-r border-[#8a8a8a] flex items-center justify-center">Articles</div>
        <div class="w-[113px] h-[24px] mt-[3.500px] border-r border-[#8a8a8a] flex items-center justify-center">Code Base</div>
        <div class="w-[86.500px] h-[24px] mt-[3.500px] border-r border-[#8a8a8a] flex items-center justify-center">Experts</div>
        <div class="w-[86px] h-[24px] mt-[3.500px] border-r border-[#8a8a8a] flex items-center justify-center">Journal</div>
      </div>
      <div class="h-[4px] shrink-0 bg-[#f8f8f8] ml-[-1px]"></div>
    </div>
  </div>
</div>

<!-- status bar -->
<div class="h-[22px] shrink-0 overflow-hidden flex items-start text-[17.500px] leading-[18px] tracking-[-0.2px] whitespace-nowrap">
  <div class="w-[814px] shrink-0 pt-[10px] ml-[-11px] mr-[11px]">For Help, press F1</div>
  <div class="w-[177px] shrink-0 mt-[3px] h-[20px] border-l border-[#aaa] pl-[6px] pt-[7px]">Default</div>
  <div class="w-[161px] shrink-0 mt-[3px] h-[20px] border-l border-[#aaa]"></div>
  <div class="w-[110px] shrink-0 mt-[3px] h-[20px] border-l border-[#aaa]"></div>
  <div class="w-[108px] shrink-0 mt-[3px] h-[20px] border-l border-[#aaa]"></div>
  <div class="w-[104px] shrink-0 mt-[3px] h-[20px] border-l border-[#aaa]"></div>
  <div class="w-[107px] shrink-0 mt-[3px] h-[20px] border-l border-[#aaa]"></div>
  <div class="w-[104px] shrink-0 mt-[3px] h-[20px] border-l border-[#aaa]"></div>
  <div class="shrink-0 mt-[3px] h-[20px] border-l border-[#aaa] pl-[5px] flex items-start">
    <svg class="w-[40px] h-[16px] mt-[4px] shrink-0" viewBox="0 0 40 16"><path d="M1 0v16M5 0v16M9 0v16M13 0v16M17 0v16M21 0v16M25 0v16M29 0v16M33 0v16M37 0v16" stroke="#6c7a10" stroke-width="2.200" stroke-dasharray="9 7"/><path d="M21 12v4M25 10v6M29 9v7M33 8v8M37 6v10" stroke="#123c5c" stroke-width="2.200"/></svg>
    <span class="ml-[6px] pt-[7px]">1692/2 kb</span>
  </div>
</div>

<!-- taskbar -->
<div class="h-[71px] shrink-0 border-t-2 border-[#a9a9a9] flex items-start pt-[16px] bg-[linear-gradient(90deg,#ece5e2_0%,#e2dfdd_15%,#dcdcdc_35%,#e8dcdc_52%,#eadcdb_66%,#e3dfdc_75%,#e0ddd9_85%,#e8e2da_100%)]">
  <div class="relative w-[48px] h-[40px] ml-[3px] shrink-0">
    <svg class="absolute left-0 top-[11px] w-[36px] h-[25px]" viewBox="0 0 36 25"><circle cx="26" cy="8" r="5" fill="#f08a2a"/><path d="M5 24a5 5 0 0 1-2-10 6 6 0 0 1 6-6 10 9 0 0 1 18 1 7 7 0 0 1 4 15z" fill="#a7c8ee" stroke="#8fb4e0"/></svg>
    <div class="absolute left-[12px] top-[-6px] w-[36px] h-[22px] rounded-full bg-[#f4f4f4] flex items-center justify-center text-[15px] tracking-[-0.3px] text-[#222]">32°</div>
  </div>
  <svg class="w-[35px] h-[35px] ml-[158px] shrink-0 mt-[1px]" viewBox="0 0 35 35"><defs><linearGradient id="wb" x1="0" y1="0" x2="1" y2="1"><stop offset="0" stop-color="#41c6f7"/><stop offset="1" stop-color="#0a6acb"/></linearGradient></defs><path d="M0 3a3 3 0 0 1 3-3h13.500v16.500H0zM18.500 0H32a3 3 0 0 1 3 3v13.500H18.500zM0 18.500h16.500V35H3a3 3 0 0 1-3-3zM18.500 18.500H35V32a3 3 0 0 1-3 3H18.500z" fill="url(#wb)"/></svg>
  <svg class="w-[32px] h-[33px] ml-[33.600px] shrink-0 mt-[2px]" viewBox="0 0 32 33"><circle cx="14" cy="14" r="11.500" fill="none" stroke="#222" stroke-width="3.800"/><path d="M22 23l8 9" stroke="#222" stroke-width="4" stroke-linecap="round"/></svg>
  <svg class="w-[36px] h-[36px] ml-[32px] shrink-0" viewBox="0 0 36 36"><rect x="10" y="0" width="26" height="25" rx="3" fill="#f8f8f8" stroke="#e0e0e0"/><rect x="9" y="9" width="17" height="16" fill="#c4c4c4"/><path d="M3 15h6v10h17v8a3 3 0 0 1-3 3H3a3 3 0 0 1-3-3V18a3 3 0 0 1 3-3z" fill="#2a2a2a"/></svg>
  <div class="relative w-[36px] h-[36px] ml-[30px] shrink-0">
    <svg class="w-[36px] h-[36px]" viewBox="0 0 36 36"><path d="M0 2h12l3 4h21v28a2 2 0 0 1-2 2H2a2 2 0 0 1-2-2z" fill="#e8a820"/><rect y="7" width="36" height="29" rx="2" fill="#fdd264"/><rect x="9" y="23" width="18" height="13" rx="2" fill="#1477cc"/><path d="M13 28h10" stroke="#fff" stroke-width="2"/></svg>
    <div class="absolute left-[15px] top-[41px] w-[6px] h-[6px] rounded-full bg-[#808080]"></div>
  </div>
  <div class="w-[36px] h-[36px] ml-[30px] shrink-0 bg-[#ffde00] flex items-center justify-center text-[8.500px] font-bold tracking-[-0.2px] text-[#3a3000]">exness</div>
  <div class="relative w-[36px] h-[36px] ml-[30px] shrink-0 bg-black flex items-center justify-center text-[16px] font-bold tracking-[-0.5px] text-white">HF<span class="text-[#ff4040]">M</span><div class="absolute left-[15px] top-[41px] w-[6px] h-[6px] rounded-full bg-[#808080]"></div></div>
  <div class="w-[36px] h-[36px] ml-[30px] shrink-0 bg-black flex items-center justify-center text-[16px] font-bold tracking-[-0.5px] text-white">HF<span class="text-[#ff4040]">M</span></div>
  <div class="w-[36px] h-[36px] ml-[30px] shrink-0 bg-black flex items-center justify-center text-[16px] font-bold tracking-[-0.5px] text-white">HF<span class="text-[#ff4040]">M</span></div>
  <div class="relative w-[36px] h-[36px] ml-[30px] shrink-0">
    <svg class="w-[36px] h-[36px]" viewBox="0 0 36 36"><rect x="6" width="30" height="12" rx="2" fill="#41a5ee"/><rect x="6" y="12" width="30" height="12" fill="#2b7cd3"/><rect x="6" y="24" width="30" height="12" rx="2" fill="#185abd"/><rect y="9" width="18" height="18" rx="2" fill="#103f91"/></svg>
    <span class="absolute left-0 top-[9px] w-[18px] h-[18px] text-white font-bold text-[13px] leading-[18px] text-center">W</span>
    <div class="absolute left-[15px] top-[41px] w-[6px] h-[6px] rounded-full bg-[#808080]"></div>
  </div>
  <div class="relative w-[36px] h-[36px] ml-[30px] shrink-0">
    <svg class="w-[36px] h-[36px]" viewBox="0 0 36 36"><ellipse cx="17" cy="19" rx="16" ry="17" fill="#2aa1da"/><path d="M6 18 27 9l-3 19-7-5-3 3-1-6 10-8-13 7z" fill="#fff"/></svg>
    <div class="absolute left-[20px] top-[-6px] w-[24px] h-[16px] rounded-[8px] bg-[#ee4040] text-white text-[12px] leading-[16px] text-center">.27</div>
    <div class="absolute left-[15px] top-[41px] w-[6px] h-[6px] rounded-full bg-[#808080]"></div>
  </div>
  <div class="relative w-[36px] h-[36px] ml-[30px] shrink-0">
    <svg class="w-[36px] h-[36px]" viewBox="0 0 36 36"><rect x="6" width="15" height="12" rx="2" fill="#21a366"/><rect x="21" width="15" height="12" rx="2" fill="#33c481"/><rect x="6" y="12" width="15" height="12" fill="#107c41"/><rect x="21" y="12" width="15" height="12" fill="#21a366"/><rect x="6" y="24" width="30" height="12" rx="2" fill="#185c37"/><rect y="9" width="18" height="18" rx="2" fill="#107c41"/></svg>
    <span class="absolute left-0 top-[9px] w-[18px] h-[18px] text-white font-bold text-[13px] leading-[18px] text-center">X</span>
  </div>
  <div class="relative w-[36px] h-[36px] ml-[31px] shrink-0">
    <svg class="w-[36px] h-[36px]" viewBox="0 0 36 36"><path d="M18 18 6 6a17 18 0 0 1 28 3z" fill="#e53a30"/><path d="M18 18 6 6A17 18 0 0 0 14 35z" fill="#f5c518"/><path d="M18 18 34 9a17 18 0 0 1-20 26z" fill="#2fa84f"/><circle cx="18" cy="18" r="8" fill="#fff"/><circle cx="18" cy="18" r="6" fill="#2a7de1"/></svg>
    <div class="absolute left-[15px] top-[-11px] w-[21px] h-[26px] rounded-[50%] bg-[#1a80c4] text-white text-[14px] leading-[26px] text-center">r</div>
    <div class="absolute left-[15px] top-[41px] w-[6px] h-[6px] rounded-full bg-[#808080]"></div>
  </div>
  <div class="relative w-[36px] h-[36px] ml-[31px] shrink-0">
    <svg class="w-[36px] h-[36px]" viewBox="0 0 36 36"><rect x="4" y="2" width="28" height="30" rx="2" fill="#8fd4f0"/><rect x="4" y="31" width="28" height="5" fill="#8a4a24"/><path d="M9 1v5M14 1v5M19 1v5M24 1v5M28 1v5" stroke="#2a5f85" stroke-width="2"/><path d="M9 12h18M9 18h18M9 24h18" stroke="#0f5f92" stroke-width="2"/></svg>
    <div class="absolute left-[15px] top-[41px] w-[6px] h-[6px] rounded-full bg-[#808080]"></div>
  </div>
  <svg class="w-[36px] h-[36px] ml-[28px] shrink-0" viewBox="0 0 36 36"><rect x="4" y="0" width="24" height="24" fill="#dfe9f4" stroke="#6c96c4"/><rect x="4" y="0" width="24" height="4" fill="#4d8ed0"/><path d="M14 30 30 30V11H14z" fill="#fff" stroke="#6c96c4"/><path d="M17 22l3-6 3 8 3-10" stroke="#2a6fb8" fill="none"/><circle cx="13" cy="17" r="5.500" fill="#eebb90" stroke="#a86c3c"/><path d="M4 36q0-11 9-11t9 11z" fill="#5cb85c" stroke="#2c882c"/></svg>
  <svg class="w-[36px] h-[36px] ml-[30px] shrink-0" viewBox="0 0 36 36"><rect x=".5" y=".5" width="35" height="35" fill="#fff" stroke="#a0a0a0"/><rect x="1" y="1" width="34" height="4" fill="#888"/><rect x="12" y="7" width="13" height="25" rx="1" fill="#0f7bd8"/></svg>
  <div class="relative w-[36px] h-[36px] ml-[30px] shrink-0 bg-[#ffde00] flex items-center justify-center text-[8.500px] font-bold tracking-[-0.2px] text-[#3a3000]">exness<div class="absolute left-[15px] top-[41px] w-[6px] h-[6px] rounded-full bg-[#808080]"></div></div>
  <div class="relative w-[36px] h-[36px] ml-[30px] shrink-0 bg-[#ffde00] flex items-center justify-center text-[8.500px] font-bold tracking-[-0.2px] text-[#3a3000]">exness<div class="absolute left-[15px] top-[41px] w-[6px] h-[6px] rounded-full bg-[#808080]"></div></div>
  <div class="w-[2px] h-[71px] mt-[-16px] ml-[18px] shrink-0 bg-[#7c7c7c]"></div>
  <svg class="w-[36px] h-[36px] ml-[17px] shrink-0" viewBox="0 0 36 36"><rect x="0" y="0" width="24" height="26" rx="3" fill="#f2f2f2" stroke="#ddd"/><path d="M3 4h5v5H3zM10 4h5v5h-5zM3 12h5v5H3zM3 20h5v5H3z" fill="#e0402a"/><path d="M20 8 23 22l-3 5" stroke="#9a9a9a" stroke-width="3" fill="none"/><path d="M12 20 34 20" stroke="#9a9a9a" stroke-width="3"/><circle cx="33" cy="18" r="3" fill="none" stroke="#1b8ae0" stroke-width="2.500"/><circle cx="18" cy="32" r="3" fill="none" stroke="#1b8ae0" stroke-width="2.500"/></svg>
  <svg class="w-[24px] h-[6px] ml-[36px] mt-[15px] shrink-0" viewBox="0 0 24 6"><circle cx="3" cy="3" r="2.500" fill="#222"/><circle cx="12" cy="3" r="2.500" fill="#222"/><circle cx="21" cy="3" r="2.500" fill="#222"/></svg>
  <div class="w-[2px] h-[71px] mt-[-16px] ml-[25px] shrink-0 bg-[#7c7c7c]"></div>
  <svg class="w-[17px] h-[14px] ml-[105.500px] mt-[11px] shrink-0" viewBox="0 0 17 14"><path d="M1 12 8.500 2 16 12" fill="none" stroke="#111" stroke-width="2"/></svg>
  <svg class="w-[26px] h-[32px] ml-[26px] shrink-0" viewBox="0 0 26 32"><path d="M4 26q-4-5 0-10 1-9 9-10 8 0 9 10 3 6-1 10z" fill="none" stroke="#111" stroke-width="2"/><path d="M3 2 23 30" stroke="#111" stroke-width="2"/></svg>
  <svg class="w-[24px] h-[30px] ml-[18px] shrink-0" viewBox="0 0 24 30"><path d="M1 9q11-11 22 0M5 15q7-7 14 0M8 20q4-4 8 0" fill="none" stroke="#111" stroke-width="2"/><circle cx="12" cy="25" r="2" fill="#111"/></svg>
  <svg class="w-[24px] h-[32px] ml-[14px] shrink-0" viewBox="0 0 24 32"><path d="M1 12h4l7-7v22l-7-7H1z" fill="none" stroke="#111" stroke-width="2"/><path d="M15 11q3 5 0 10M18 7q5 9 0 18M21 3q7 13 0 26" fill="none" stroke="#111" stroke-width="1.500"/></svg>
  <svg class="w-[26px] h-[24px] ml-[12px] mt-[3px] shrink-0" viewBox="0 0 26 24"><rect x="1" y="2" width="21" height="20" rx="4" fill="none" stroke="#111" stroke-width="2"/><rect x="4" y="6" width="11" height="12" fill="#111"/><rect x="23" y="9" width="3" height="6" fill="#111"/></svg>
  <div class="ml-auto mr-[13px] mt-[-5px] text-right text-[#1b1b1b] leading-[24px] tracking-[-0.2px]"><div>6:21 PM</div><div>5/26/2025</div></div>
</div>

<!-- hand-drawn highlighter over the screenshot -->
<svg class="absolute left-0 top-0 w-[1877px] h-[1029px] pointer-events-none mix-blend-multiply" viewBox="0 0 1877 1029" fill="none" stroke="#25ea00" stroke-width="5.500" stroke-linejoin="round">
  <path d="M105 853V843Q120 842 140 838Q160 832 203 830Q213 830 217 842Q225 865 225 880Q226 895 210 902Q175 914 123 920Q100 923 98 910Q96 880 100 853L104 843"/>
  <path d="M268.500 846L273 852Q300 845 323 842Q370 838 405 837Q406 860 402 880Q402 895 395 899Q365 907 333 913Q310 925 296 917Q280 905 275 885Q271 865 270 847"/>
  <path stroke-width="7" d="M1000 858L983 855Q982 866 990 874Q1010 885 1050 900Q1070 908 1090 907Q1110 906 1123 900Q1150 888 1170 880Q1190 873 1203 870Q1230 864 1243 857Q1256 852 1257 840Q1257 825 1254 815Q1250 795 1245 783Q1235 768 1223 760Q1215 753 1200 753Q1170 751 1153 755Q1140 761 1130 762L980 763Q966 763 965 775L965 820Q966 835 975 847L982 857"/>
  <path stroke-width="3.700" d="M1103.300 747V894"/>
  <path stroke-width="9.500" d="M1816 794 1753 794Q1741 796 1741 806L1741 858 1822 858"/>
</svg>
</div>
</body></html>
